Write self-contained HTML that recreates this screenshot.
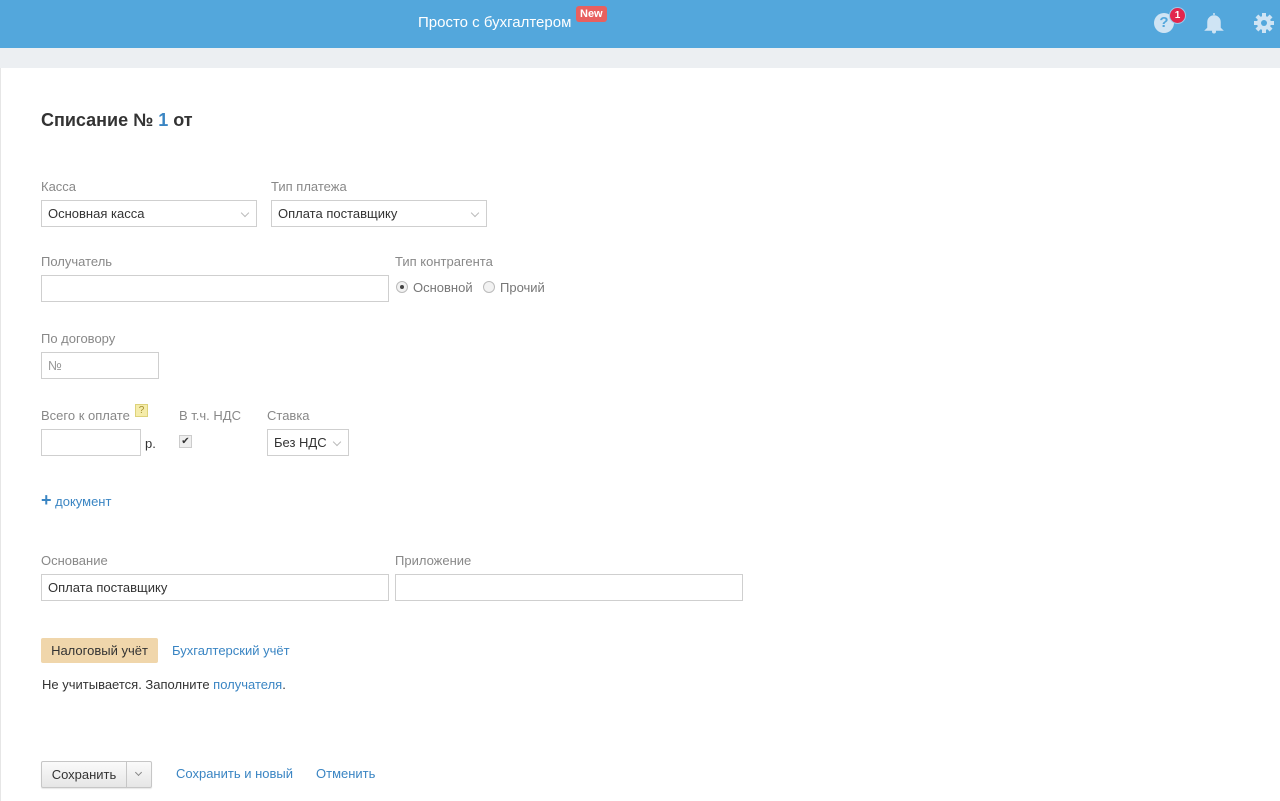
<!DOCTYPE html>
<html><head><meta charset="utf-8"><style>
*{box-sizing:border-box;margin:0;padding:0}
body{width:1280px;height:801px;overflow:hidden;background:#fff;font-family:"Liberation Sans",Arial,sans-serif;font-size:13px;color:#333;position:relative}
.hdr{position:absolute;left:0;top:0;width:1280px;height:48px;background:#53a7dc}
.band{position:absolute;left:0;top:48px;width:1280px;height:20px;background:#eceff2}
.a{position:absolute}
.lbl{position:absolute;color:#888;font-size:13px}
.inp{position:absolute;border:1px solid #cfcfcf;height:27px;background:#fff;padding:0 6px;line-height:25px;font-size:13px;color:#333}
.chev{position:absolute;right:8px;top:9px;width:6px;height:6px;border-right:1px solid #bbb;border-bottom:1px solid #bbb;transform:rotate(45deg)}
.link{color:#3a85c3}
.radio{position:absolute;width:12px;height:12px;border:1px solid #bbb;border-radius:50%;background:#f2f2f2}
</style></head><body>
<div class="hdr"></div>
<div class="a" style="left:418px;top:14px;color:#fff;font-size:15px">Просто с бухгалтером</div>
<div class="a" style="left:576px;top:6px;background:#e8605f;color:#fff;font-size:11px;font-weight:bold;padding:2px 4px;border-radius:3px">New</div>
<div class="a" style="left:1154px;top:13px;width:20px;height:20px;border-radius:50%;background:#cfe4f4;color:#53a7dc;font-weight:bold;font-size:15px;text-align:center;line-height:20px">?</div>
<div class="a" style="left:1169px;top:7px;width:17px;height:17px;border-radius:50%;background:#e2264d;border:1px solid #9cc9ea;color:#fff;font-size:10px;text-align:center;line-height:15px;font-weight:bold">1</div>
<svg class="a" style="left:1204px;top:12px" width="20" height="22" viewBox="0 0 20 22"><path d="M10 1v2M4 16V10a6 6 0 0 1 12 0v6l2 2H2z" fill="#cfe4f4" stroke="#cfe4f4" stroke-width="1.5"/><circle cx="10" cy="19.5" r="2" fill="#cfe4f4"/></svg>
<svg class="a" style="left:1253px;top:12px" width="22" height="22" viewBox="0 0 22 22"><g fill="#cfe4f4"><circle cx="11" cy="11" r="7"/><rect x="9" y="1" width="4" height="20"/><rect x="1" y="9" width="20" height="4"/><rect x="9" y="1" width="4" height="20" transform="rotate(45 11 11)"/><rect x="9" y="1" width="4" height="20" transform="rotate(-45 11 11)"/></g><circle cx="11" cy="11" r="3" fill="#53a7dc"/></svg>
<div class="band"></div>
<div class="a" style="left:0;top:68px;width:1px;height:733px;background:#e6e6e6"></div>

<div class="a" style="left:41px;top:110px;font-size:18px;font-weight:bold;color:#333">Списание № <span style="color:#3a85c3">1</span> от</div>

<div class="lbl" style="left:41px;top:179px">Касса</div>
<div class="inp" style="left:41px;top:200px;width:216px">Основная касса<div class="chev"></div></div>
<div class="lbl" style="left:271px;top:179px">Тип платежа</div>
<div class="inp" style="left:271px;top:200px;width:216px">Оплата поставщику<div class="chev"></div></div>

<div class="lbl" style="left:41px;top:254px">Получатель</div>
<div class="inp" style="left:41px;top:275px;width:348px"></div>
<div class="lbl" style="left:395px;top:254px">Тип контрагента</div>
<div class="radio" style="left:396px;top:281px"><div style="position:absolute;left:3px;top:3px;width:4px;height:4px;border-radius:50%;background:#444"></div></div>
<div class="lbl" style="left:413px;top:280px;color:#777">Основной</div>
<div class="radio" style="left:483px;top:281px"></div>
<div class="lbl" style="left:500px;top:280px;color:#777">Прочий</div>

<div class="lbl" style="left:41px;top:331px">По договору</div>
<div class="inp" style="left:41px;top:352px;width:118px;color:#999">№</div>

<div class="lbl" style="left:41px;top:408px">Всего к оплате</div>
<div class="a" style="left:135px;top:404px;width:13px;height:13px;background:#f5ecaa;border:1px solid #ddd27a;font-size:10px;color:#a59030;text-align:center;line-height:11px">?</div>
<div class="lbl" style="left:179px;top:408px">В т.ч. НДС</div>
<div class="lbl" style="left:267px;top:408px">Ставка</div>
<div class="inp" style="left:41px;top:429px;width:100px"></div>
<div class="a" style="left:145px;top:436px">р.</div>
<div class="a" style="left:179px;top:435px;width:13px;height:13px;border:1px solid #ccc;background:#eee;font-size:10px;text-align:center;line-height:11px;color:#333">✔</div>
<div class="inp" style="left:267px;top:429px;width:82px">Без НДС<div class="chev"></div></div>

<div class="a link" style="left:41px;top:493px"><span style="font-size:18px;font-weight:bold;line-height:14px">+</span> документ</div>

<div class="lbl" style="left:41px;top:553px">Основание</div>
<div class="inp" style="left:41px;top:574px;width:348px">Оплата поставщику</div>
<div class="lbl" style="left:395px;top:553px">Приложение</div>
<div class="inp" style="left:395px;top:574px;width:348px"></div>

<div class="a" style="left:41px;top:638px;width:117px;height:25px;background:#f0d6ab;border-radius:2px;text-align:center;line-height:25px">Налоговый учёт</div>
<div class="a link" style="left:172px;top:643px">Бухгалтерский учёт</div>
<div class="a" style="left:42px;top:677px">Не учитывается. Заполните <span class="link">получателя</span>.</div>

<div class="a" style="left:41px;top:761px;width:111px;height:27px;border:1px solid #c6c6c6;border-radius:2px;background:linear-gradient(#fafafa,#e6e6e6);box-shadow:0 1px 1px rgba(0,0,0,.1)">
<div class="a" style="left:0;top:0;width:84px;line-height:25px;text-align:center">Сохранить</div>
<div class="a" style="left:84px;top:0;width:1px;height:25px;background:#c6c6c6"></div>
<div class="a" style="left:94px;top:8px;width:5px;height:5px;border-right:1px solid #888;border-bottom:1px solid #888;transform:rotate(45deg)"></div>
</div>
<div class="a link" style="left:176px;top:766px">Сохранить и новый</div>
<div class="a link" style="left:316px;top:766px">Отменить</div>
</body></html>
